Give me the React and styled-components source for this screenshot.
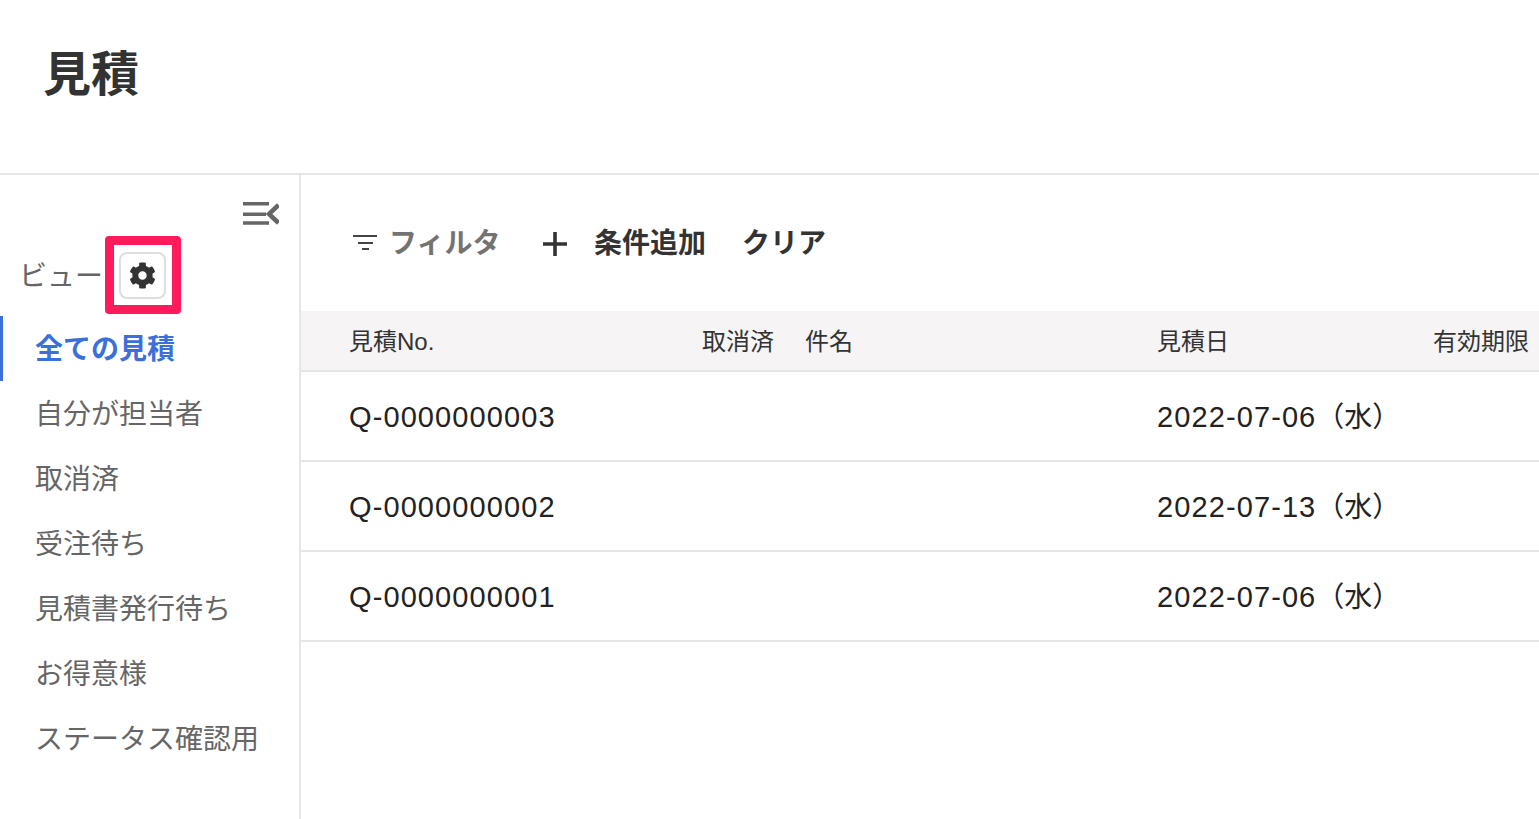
import styled, { createGlobalStyle } from "styled-components";
import { FaCog } from "react-icons/fa";

const GlobalStyle = createGlobalStyle`
  html, body {
    margin: 0;
    padding: 0;
    height: 819px;
    overflow: hidden;
    background: #fff;
    font-family: "Liberation Sans", "Noto Sans CJK JP", sans-serif;
    color: #333;
  }
`;

const Page = styled.div`
  width: 1539px;
  height: 819px;
  display: flex;
  flex-direction: column;
  overflow: hidden;
`;

const Header = styled.header`
  flex: none;
  height: 130px;
  border-bottom: 2px solid #e6e6e6;
  padding: 43px 0 0 43px;
`;

const Title = styled.h1`
  margin: 0;
  font-size: 48px;
  line-height: 64px;
  font-weight: 700;
  color: #333;
`;

const Body = styled.div`
  flex: 1;
  display: flex;
  min-height: 0;
`;

const Sidebar = styled.aside`
  width: 299px;
  flex: none;
  border-right: 2px solid #e6e6e6;
  padding-top: 25px;
`;

const CollapseRow = styled.div`
  height: 26px;
  display: flex;
  justify-content: flex-end;
  padding-right: 20px;
`;

const ViewHeading = styled.div`
  margin-top: 10px;
  display: flex;
  align-items: center;
  padding-left: 20px;
  height: 78px;
`;

const ViewLabel = styled.span`
  font-size: 28px;
  line-height: 36px;
  margin: 4px 0 0 -1px;
  color: #666;
  width: 86px;
  white-space: nowrap;
`;

const Highlight = styled.div`
  width: 76px;
  height: 78px;
  box-sizing: border-box;
  border: 9px solid #ff1a5c;
  border-radius: 4px;
  display: flex;
  align-items: center;
  justify-content: center;
`;

const GearButton = styled.button`
  width: 47px;
  height: 47px;
  margin-left: -2px;
  padding: 0;
  background: #fff;
  border: 2px solid #dcdfe2;
  border-radius: 8px;
  color: #333;
  display: flex;
  align-items: center;
  justify-content: center;
`;

const ViewList = styled.ul`
  list-style: none;
  margin: 2px 0 0;
  padding: 0;
`;

const ViewItem = styled.li`
  height: 65px;
  display: flex;
  align-items: center;
  box-sizing: border-box;
  padding-left: ${(p) => (p.$active ? "32px" : "35px")};
  padding-bottom: 4px;
  border-left: ${(p) => (p.$active ? "3px solid #3b6fdb" : "none")};
  font-size: 28px;
  font-weight: ${(p) => (p.$active ? 700 : 400)};
  color: ${(p) => (p.$active ? "#3b6fdb" : "#666")};
`;

const Main = styled.main`
  flex: 1;
  min-width: 0;
`;

const Toolbar = styled.div`
  height: 136px;
  display: flex;
  align-items: center;
  padding: 0 0 4px 51px;
  box-sizing: border-box;
  font-size: 28px;
`;

const FilterLabel = styled.span`
  margin-left: 12px;
  font-weight: 700;
  color: #737373;
  width: 107px;
  white-space: nowrap;
`;

const AddButton = styled.span`
  margin-left: 47px;
  display: flex;
  align-items: center;
  gap: 27px;
  font-weight: 700;
  color: #333;

  svg {
    margin-top: 5px;
  }
`;

const ClearButton = styled.span`
  margin-left: 36px;
  font-weight: 700;
  color: #333;
`;

const Row = styled.div`
  display: grid;
  grid-template-columns: 353px 103px 352px 276px 1fr;
  align-items: center;
  padding: 2px 0 0 48px;
  box-sizing: border-box;
  height: ${(p) => (p.$head ? "61px" : "90px")};
  background: ${(p) => (p.$head ? "#f6f4f5" : "#fff")};
  border-bottom: 2px solid #e6e6e6;
  font-size: ${(p) => (p.$head ? "24px" : "29px")};
  line-height: 36px;
  letter-spacing: ${(p) => (p.$head ? "0" : "1.1px")};
  color: ${(p) => (p.$head ? "#333" : "#222")};
  white-space: nowrap;
`;

const Weekday = styled.span`
  font-size: 28px;
  letter-spacing: 0;
`;

const CollapseIcon = () => (
  <svg width="37" height="26" viewBox="0 0 37 26" fill="none" stroke="#666" strokeWidth="3.6">
    <path d="M1 3.7h26M1 14.3h23M1 23h26" />
    <path d="M36.5 5L27 14l9.5 9" strokeWidth="4.5" />
  </svg>
);

const FilterIcon = () => (
  <svg width="25" height="18" viewBox="0 0 25 18" fill="none" stroke="#444" strokeWidth="2">
    <path d="M1 4h24M6 11h15M10 17h7" />
  </svg>
);

const PlusIcon = () => (
  <svg width="24" height="24" viewBox="0 0 24 24" fill="none" stroke="#333" strokeWidth="3.6">
    <path d="M12 0v24M0 12h24" />
  </svg>
);

const views = ["自分が担当者", "取消済", "受注待ち", "見積書発行待ち", "お得意様", "ステータス確認用"];

const quotes = [
  { no: "Q-0000000003", date: "2022-07-06" },
  { no: "Q-0000000002", date: "2022-07-13" },
  { no: "Q-0000000001", date: "2022-07-06" },
];

export default function App() {
  return (
    <Page>
      <GlobalStyle />
      <Header>
        <Title>見積</Title>
      </Header>
      <Body>
        <Sidebar>
          <CollapseRow>
            <CollapseIcon />
          </CollapseRow>
          <ViewHeading>
            <ViewLabel>ビュー</ViewLabel>
            <Highlight>
              <GearButton>
                <FaCog size={27} />
              </GearButton>
            </Highlight>
          </ViewHeading>
          <ViewList>
            <ViewItem $active>全ての見積</ViewItem>
            {views.map((v) => (
              <ViewItem key={v}>{v}</ViewItem>
            ))}
          </ViewList>
        </Sidebar>
        <Main>
          <Toolbar>
            <FilterIcon />
            <FilterLabel>フィルタ</FilterLabel>
            <AddButton>
              <PlusIcon />
              条件追加
            </AddButton>
            <ClearButton>クリア</ClearButton>
          </Toolbar>
          <Row $head>
            <span>見積No.</span>
            <span>取消済</span>
            <span>件名</span>
            <span>見積日</span>
            <span>有効期限</span>
          </Row>
          {quotes.map((q) => (
            <Row key={q.no}>
              <span>{q.no}</span>
              <span />
              <span />
              <span>
                {q.date}
                <Weekday>（水）</Weekday>
              </span>
              <span />
            </Row>
          ))}
        </Main>
      </Body>
    </Page>
  );
}
